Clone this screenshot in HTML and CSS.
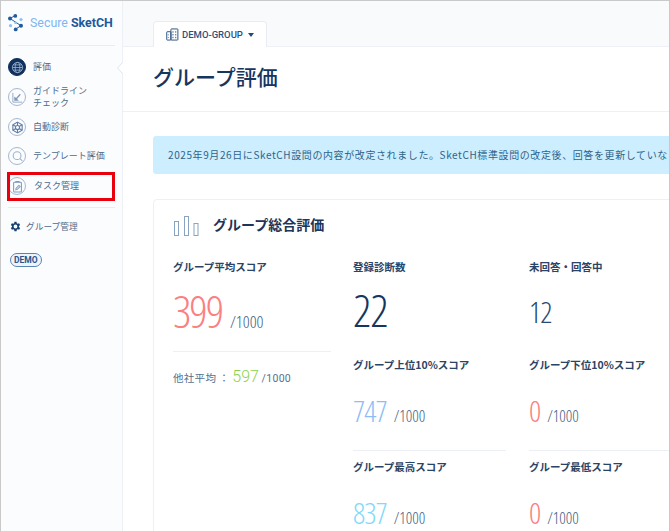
FILE: index.html
```html
<!DOCTYPE html>
<html lang="ja">
<head>
<meta charset="utf-8">
<title>グループ評価</title>
<link rel="stylesheet" href="styles.css">
</head>
<body>
<div class="frame">
  <aside class="sidebar">
    <div class="logo">
      <svg class="logo-mark" viewBox="0 0 16 18" width="16" height="18">
        <path d="M2 4.500 13 11.700 7.700 15M7.300 1.500 2 4.500" stroke="#1f5c9e" stroke-width="1" fill="none"/>
        <circle cx="7.300" cy="1.900" r="1.900" fill="#1f5c9e"/><circle cx="2" cy="4.500" r="2" fill="#1f5c9e"/>
        <circle cx="13" cy="5.500" r="1.600" fill="#8cc0f2"/><circle cx="7.500" cy="8.800" r="1.300" fill="#8cc0f2"/>
        <circle cx="2.500" cy="11.700" r="1.600" fill="#8cc0f2"/><circle cx="13" cy="11.700" r="2" fill="#1f5c9e"/>
        <circle cx="7.700" cy="15.400" r="1.900" fill="#1f5c9e"/>
      </svg>
      <span class="logo-text"><span class="logo-light">Secure</span> <b>SketCH</b></span>
    </div>
    <nav class="nav">
      <a class="nav-item nav-active">
        <span class="nav-icon icon-on"><svg viewBox="0 0 14 14" width="14" height="14" fill="none" stroke="#9db2cc" stroke-width=".9"><circle cx="7" cy="7" r="5.500"/><ellipse cx="7" cy="7" rx="2.500" ry="5.500"/><path d="M1.500 7h11M2.300 4.200h9.400M2.300 9.800h9.400"/></svg></span>
        <span>評価</span>
      </a>
      <a class="nav-item nav-two">
        <span class="nav-icon"><svg viewBox="0 0 14 14" width="14" height="14"><path d="M2 2v10h10" fill="none" stroke="#8fa6c4" stroke-width="1"/><path d="M3.500 10.500V6l2 1.500 4-4.500 1 1-4 4.500 2 2z" fill="#7f98b8"/></svg></span>
        <span>ガイドライン<br>チェック</span>
      </a>
      <a class="nav-item nav-auto">
        <span class="nav-icon"><svg viewBox="0 0 14 14" width="14" height="14" fill="none" stroke="#5d7fa8" stroke-width="1.200"><path d="M7 1.200 12 4v6l-5 2.800L2 10V4z"/><circle cx="7" cy="7" r="2.200"/><path d="M7 1.200v3.600M7 9.200v3.600M2 4l3.200 2M8.800 8 12 10M12 4 8.800 6M5.200 8 2 10"/></svg></span>
        <span>自動診断</span>
      </a>
      <a class="nav-item nav-tpl">
        <span class="nav-icon"><svg viewBox="0 0 16 16" width="16" height="16" fill="none" stroke="#9db2cc" stroke-width="1.300"><circle cx="7.500" cy="7" r="4.800"/><path d="m11 10.500 3 3"/></svg></span>
        <span>テンプレート評価</span>
      </a>
      <a class="nav-item nav-task">
        <span class="nav-icon"><svg viewBox="0 0 14 14" width="14" height="14" fill="none" stroke="#7f9abb" stroke-width="1.100"><rect x="2.800" y="2.500" width="8.400" height="10.500" rx="1"/><path d="M5.300 3V1.500h3.400V3M5.200 10.500l.3-1.700 3-3 1.300 1.300-3 3z"/></svg></span>
        <span class="nav-task-label">タスク管理</span>
      </a>
    </nav>
    <a class="group-link">
      <svg viewBox="0 0 24 24" width="13" height="13" fill="#164173"><path fill-rule="evenodd" d="M19.400 13a7.500 7.500 0 0 0 0-2l2.100-1.600-2-3.500-2.500 1a7.500 7.500 0 0 0-1.700-1L15 3.300h-4l-.4 2.600a7.500 7.500 0 0 0-1.700 1l-2.500-1-2 3.500L6.500 11a7.500 7.500 0 0 0 0 2l-2.100 1.600 2 3.500 2.500-1a7.500 7.500 0 0 0 1.700 1l.4 2.600h4l.4-2.600a7.500 7.500 0 0 0 1.700-1l2.500 1 2-3.500zM13 15.500a3.500 3.500 0 1 1 0-7 3.500 3.500 0 0 1 0 7z" transform="translate(-1 0)"/></svg>
      <span>グループ管理</span>
    </a>
    <span class="demo-badge">DEMO</span>
    <svg class="caret-tip" viewBox="0 0 6 12" width="6" height="12"><path d="M6 0 .5 6 6 12z" fill="#fff"/><path d="M6 0 .5 6 6 12" fill="none" stroke="#dfe5ee"/></svg>
    <span class="highlight"></span>
  </aside>
  <main class="main">
    <div class="tabs">
      <div class="tab">
        <svg viewBox="0 0 14 14" width="13" height="13" fill="none" stroke="#1f4a7c" stroke-width="1"><rect x=".8" y="4" width="4.500" height="9" rx=".6"/><rect x="5.300" y="1" width="7.500" height="12" rx=".6"/><path d="M7.500 3.500v1.500M10.500 3.500v1.500M7.500 6.500v1.500M10.500 6.500v1.500M7.500 9.500v1.500M10.500 9.500v1.500M2.500 7v.8M2.500 10v.8"/></svg>
        <span>DEMO-GROUP</span>
        <span class="tab-caret"></span>
      </div>
    </div>
    <header class="page-head">
      <h1>グループ評価</h1>
    </header>
    <div class="content">
      <div class="notice">2025年9月26日にSketCH設問の内容が改定されました。SketCH標準設問の改定後、回答を更新していな</div>
      <section class="card">
        <div class="card-title">
          <svg class="bars" viewBox="0 0 25 21" width="25" height="21" fill="none" stroke="#8aa3c2" stroke-width="1"><rect x=".5" y="5.500" width="4" height="14"/><rect x="10.500" y=".5" width="4" height="19"/><rect x="20" y="7.500" width="4" height="12"/></svg>
          <h2>グループ総合評価</h2>
        </div>
        <div class="stats">
          <div class="col-avg">
            <h3>グループ平均スコア</h3>
            <div class="score score-big"><span class="num num-wide c-red">399</span><span class="max max-big">/1000</span></div>
            <div class="other">他社平均 ： <span class="other-num">597</span> <span class="other-max">/1000</span></div>
          </div>
          <div class="col-grid">
            <div class="cell cell-top">
              <h3>登録診断数</h3>
              <div class="score score-count"><span class="num c-navy">22</span></div>
            </div>
            <div class="cell cell-top">
              <h3>未回答・回答中</h3>
              <div class="score score-twelve"><span class="num-mid c-navy2">12</span></div>
            </div>
            <div class="cell cell-middle">
              <h3>グループ上位10%スコア</h3>
              <div class="score score-mid"><span class="num-mid c-blue">747</span><span class="max">/1000</span></div>
            </div>
            <div class="cell cell-middle">
              <h3>グループ下位10%スコア</h3>
              <div class="score score-mid"><span class="num-mid c-red">0</span><span class="max">/1000</span></div>
            </div>
            <div class="cell cell-rule">
              <h3>グループ最高スコア</h3>
              <div class="score score-mid"><span class="num-mid c-cyan">837</span><span class="max">/1000</span></div>
            </div>
            <div class="cell cell-rule">
              <h3>グループ最低スコア</h3>
              <div class="score score-mid"><span class="num-mid c-red">0</span><span class="max">/1000</span></div>
            </div>
          </div>
        </div>
      </section>
    </div>
  </main>
</div>
</body>
</html>
```

FILE: styles.css
```css
* { box-sizing: border-box; }
html, body { margin: 0; height: 100%; overflow: hidden; }
body { font-family: "Noto Sans CJK JP", "Noto Sans", sans-serif; color: #1d3557; background: #fff; }
h1, h2, h3 { margin: 0; }

.frame { display: flex; width: 670px; height: 531px; border: 1px solid #c9c9c9; border-bottom: 0; overflow: hidden; }

.sidebar { position: relative; flex: 0 0 122px; background: #fbfcfe; border-right: 1px solid #edf0f5; padding: 11px 7px 0; }
.logo { display: flex; align-items: center; gap: 6px; height: 21px; }
.logo-text { font-family: Roboto, sans-serif; font-size: 12.400px; white-space: nowrap; color: #1c5a9c; }
.logo-light { color: #7fb6f2; }
.logo-text b { font-weight: 700; }

.nav { margin-top: 12px; border-top: 1px solid #e9ecf1; padding-top: 12px; border-bottom: 1px solid #e9ecf1; height: 163px; }
.nav-item { display: flex; align-items: center; gap: 7px; height: 18px; font-size: 9px; line-height: 12.500px; color: #4e6b8c; }
.nav-icon { flex: 0 0 18px; width: 18px; height: 18px; border-radius: 50%; border: 1px solid #a6b8cf; display: flex; align-items: center; justify-content: center; background: #fbfcfe; }
.nav-icon svg { width: 13px; height: 13px; }
.icon-on { background: #0f2f5c; border-color: #0f2f5c; }
.nav-two { margin-top: 8px; height: 26px; }
.nav-auto { margin-top: 8px; }
.nav-tpl { margin-top: 11px; }
.nav-task { margin-top: 12px; }
.nav-task-label { margin-left: 1px; }

.group-link { display: flex; align-items: center; gap: 4px; margin-top: 12px; font-size: 8.700px; color: #4e6b8c; line-height: 13px; padding-left: 1px; }
.demo-badge { display: inline-block; margin: 20px 0 0 2px; font-family: Roboto, sans-serif; font-weight: 700; font-size: 8.500px; line-height: 10px; color: #27558c; border: 1px solid #5a84b5; border-radius: 7px; padding: 1px 3px; background: #eef4fb; }

.caret-tip { position: absolute; right: -1px; top: 61px; }
.highlight { position: absolute; left: 6px; top: 171px; width: 108px; height: 29px; border: 3px solid #e8000d; }

.main { flex: 1; min-width: 0; background: #fff; overflow: hidden; }
.tabs { height: 46px; padding: 20px 0 0 30px; background: #f8fafc; border-bottom: 1px solid #edf0f5; display: flex; }
.tab { width: 114px; height: 26px; background: #fff; border: 1px solid #e9edf3; border-bottom: 0; border-radius: 4px 4px 0 0; display: flex; align-items: center; padding-left: 12px; gap: 3px; font-family: Roboto, sans-serif; font-size: 9.500px; font-weight: 500; color: #2a4f7d; }
.tab-caret { width: 0; height: 0; border: 3.500px solid transparent; border-top: 4px solid #1f4a7c; border-bottom: 0; margin-left: 2px; }

.page-head { height: 65px; border-bottom: 1px solid #edf0f5; padding: 11px 0 0 30px; }
h1 { font-size: 21px; line-height: 36px; font-weight: 500; color: #14365f; }

.content { padding: 24px 0 0 30px; }
.notice { width: 540px; height: 38px; background: #cdeeff; border-radius: 3px; padding: 0 15px; font-size: 10px; line-height: 38px; letter-spacing: .6px; color: #2f6389; white-space: nowrap; overflow: hidden; }

.card { width: 560px; margin-top: 25px; border: 1px solid #eef0f3; border-radius: 4px; padding: 11px 19px 0; height: 400px; }
.card-title { display: flex; align-items: center; gap: 14px; height: 26px; }
.card-title h2 { font-size: 14px; font-weight: 700; color: #1d3557; }
.bars { margin: 4px 0 0 1px; }

h3 { font-size: 10.500px; line-height: 15px; font-weight: 700; color: #2b4364; white-space: nowrap; }

.stats { display: flex; margin-top: 22px; }
.col-avg { flex: 0 0 158px; margin-right: 22px; }
.col-grid { flex: 1; display: grid; grid-template-columns: 153px 153px; column-gap: 23px; }

.num, .num-mid, .max { font-family: "Open Sans", sans-serif; font-weight: 300; font-stretch: 75%; }
.num { font-size: 45px; line-height: 44px; letter-spacing: -1px; }
.num-wide { letter-spacing: -2px; }
.num-mid { font-size: 30px; line-height: 36px; letter-spacing: -1px; }
.max { font-size: 16px; color: #3f5d80; margin-left: 7px; }
.max-big { font-size: 17px; margin-left: 8px; }

.score { display: flex; align-items: baseline; }
.score-big { margin-top: 15px; height: 63px; border-bottom: 1px solid #eceff3; }
.score-count { margin-top: 14px; }
.score-twelve { margin-top: 20px; }
.score-mid { margin-top: 21px; }
.other { margin-top: 15px; font-size: 10.500px; color: #566f8d; letter-spacing: .3px; }
.other-num { font-family: Roboto, sans-serif; font-weight: 300; font-size: 16px; color: #8ad14f; letter-spacing: 0; }
.other-max { font-family: Roboto, sans-serif; font-size: 10.500px; }

.cell-top { height: 98px; }
.cell-middle { height: 93px; }
.cell-rule { border-top: 1px solid #eceff3; padding-top: 8px; height: 100px; }
.c-red { color: #fb8080; }
.c-navy { color: #14365f; }
.c-navy2 { color: #284a75; }
.c-blue { color: #8dbdf5; }
.c-cyan { color: #82d8fa; }
```
